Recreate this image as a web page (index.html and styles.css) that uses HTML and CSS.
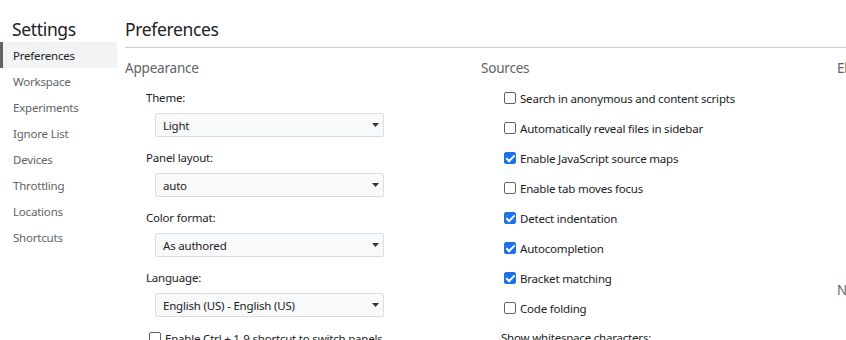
FILE: index.html
```html
<!DOCTYPE html>
<html>
<head>
<meta charset="utf-8">
<link rel="stylesheet" href="styles.css">
</head>
<body>
<div class="app">
  <nav class="sidebar">
    <div class="side-title">Settings</div>
    <ul class="tabs">
      <li class="tab selected">Preferences</li>
      <li class="tab">Workspace</li>
      <li class="tab">Experiments</li>
      <li class="tab">Ignore List</li>
      <li class="tab">Devices</li>
      <li class="tab">Throttling</li>
      <li class="tab">Locations</li>
      <li class="tab">Shortcuts</li>
    </ul>
  </nav>
  <main class="main">
    <div class="main-title">Preferences</div>
    <div class="columns">
      <section class="col">
        <h2 class="sec-title">Appearance</h2>
        <div class="field">
          <div class="field-label">Theme:</div>
          <div class="select"><span>Light</span><svg class="arrow" width="7" height="4" viewBox="0 0 7 4"><path d="M0 0h7L3.5 4z" fill="#333"/></svg></div>
        </div>
        <div class="field">
          <div class="field-label">Panel layout:</div>
          <div class="select"><span>auto</span><svg class="arrow" width="7" height="4" viewBox="0 0 7 4"><path d="M0 0h7L3.5 4z" fill="#333"/></svg></div>
        </div>
        <div class="field">
          <div class="field-label">Color format:</div>
          <div class="select"><span>As authored</span><svg class="arrow" width="7" height="4" viewBox="0 0 7 4"><path d="M0 0h7L3.5 4z" fill="#333"/></svg></div>
        </div>
        <div class="field">
          <div class="field-label">Language:</div>
          <div class="select"><span>English (US) - English (US)</span><svg class="arrow" width="7" height="4" viewBox="0 0 7 4"><path d="M0 0h7L3.5 4z" fill="#333"/></svg></div>
        </div>
        <div class="check-row appearance-check"><span class="cb"></span><span>Enable Ctrl + 1-9 shortcut to switch panels</span></div>
      </section>
      <section class="col">
        <h2 class="sec-title">Sources</h2>
        <div class="check-row"><span class="cb"></span><span>Search in anonymous and content scripts</span></div>
        <div class="check-row"><span class="cb"></span><span>Automatically reveal files in sidebar</span></div>
        <div class="check-row"><span class="cb checked"></span><span>Enable JavaScript source maps</span></div>
        <div class="check-row"><span class="cb"></span><span>Enable tab moves focus</span></div>
        <div class="check-row"><span class="cb checked"></span><span>Detect indentation</span></div>
        <div class="check-row"><span class="cb checked"></span><span>Autocompletion</span></div>
        <div class="check-row"><span class="cb checked"></span><span>Bracket matching</span></div>
        <div class="check-row"><span class="cb"></span><span>Code folding</span></div>
        <div class="plain-row">Show whitespace characters:</div>
      </section>
      <section class="col">
        <h2 class="sec-title">Elements</h2>
        <div class="check-row"><span class="cb"></span><span>Show user agent shadow DOM</span></div>
        <div class="check-row"><span class="cb checked"></span><span>Word wrap</span></div>
        <div class="check-row"><span class="cb checked"></span><span>Show HTML comments</span></div>
        <div class="check-row"><span class="cb checked"></span><span>Reveal DOM node on hover</span></div>
        <div class="check-row"><span class="cb checked"></span><span>Show detailed inspect tooltip</span></div>
        <div class="check-row"><span class="cb checked"></span><span>Show CSS documentation tooltip</span></div>
        <h2 class="sec-title net-title">Network</h2>
      </section>
    </div>
  </main>
</div>
</body>
</html>
```
FILE: styles.css
```css
* { box-sizing: border-box; }
html, body { margin: 0; padding: 0; background: #fff; }
body {
  font-family: "Noto Sans", "Open Sans", sans-serif;
  font-size: 11.5px;
  letter-spacing: -0.2px;
  color: #202124;
  width: 846px;
  height: 340px;
  overflow: hidden;
}
.app { display: flex; height: 340px; overflow: hidden; }
.sidebar { width: 117px; flex: none; }
.side-title {
  padding: 17px 0 0 12px;
  height: 42px;
  font-size: 17.5px;
  letter-spacing: -0.35px;
  line-height: 25px;
  color: #202124;
}
.tabs { list-style: none; margin: 0; padding: 0; }
.tab {
  height: 26px;
  line-height: 27px;
  color: #5f6368;
  border-left: 3px solid transparent;
  padding-left: 10px;
}
.tab.selected {
  background: #f1f3f4;
  border-left-color: #5f6368;
  color: #202124;
}
.main { flex: 1; min-width: 0; padding-left: 8px; overflow: hidden; }
.main-title {
  padding-top: 17px;
  height: 48px;
  font-size: 17.5px;
  letter-spacing: -0.35px;
  line-height: 25px;
  border-bottom: 1px solid #cbcdd1;
}
.columns { display: flex; }
.col { width: 356px; flex: none; }
.sec-title {
  margin: 10px 0 5px;
  font-size: 13.5px;
  letter-spacing: -0.2px;
  font-weight: normal;
  line-height: 20px;
  color: #5f6368;
}
.net-title { margin-top: 17px; }
.field { padding-left: 21px; margin-bottom: 6px; }
.field-label { height: 29px; line-height: 29px; }
.select {
  margin: 1px 0 0 9px;
  width: 229px;
  height: 24px;
  border: 1px solid #dadce0;
  border-radius: 2px;
  background: #f8f9fa;
  display: flex;
  align-items: center;
  justify-content: space-between;
  padding: 0 4px 0 7px;
}
.arrow { flex: none; }
.check-row {
  height: 30px;
  display: flex;
  align-items: center;
  padding-left: 23px;
  gap: 4px;
}
.appearance-check { padding-left: 24px; }
.plain-row { height: 30px; line-height: 30px; padding-left: 20px; }
.cb {
  width: 12px;
  height: 12px;
  border: 1px solid #5f6368;
  border-radius: 2px;
  flex: none;
  position: relative;
}
.cb.checked { background: #1a73e8; border-color: #1a73e8; }
.cb.checked::after {
  content: "";
  position: absolute;
  left: 3px;
  top: 0px;
  width: 3px;
  height: 7px;
  border: solid #fff;
  border-width: 0 2px 2px 0;
  transform: rotate(45deg);
}
```
